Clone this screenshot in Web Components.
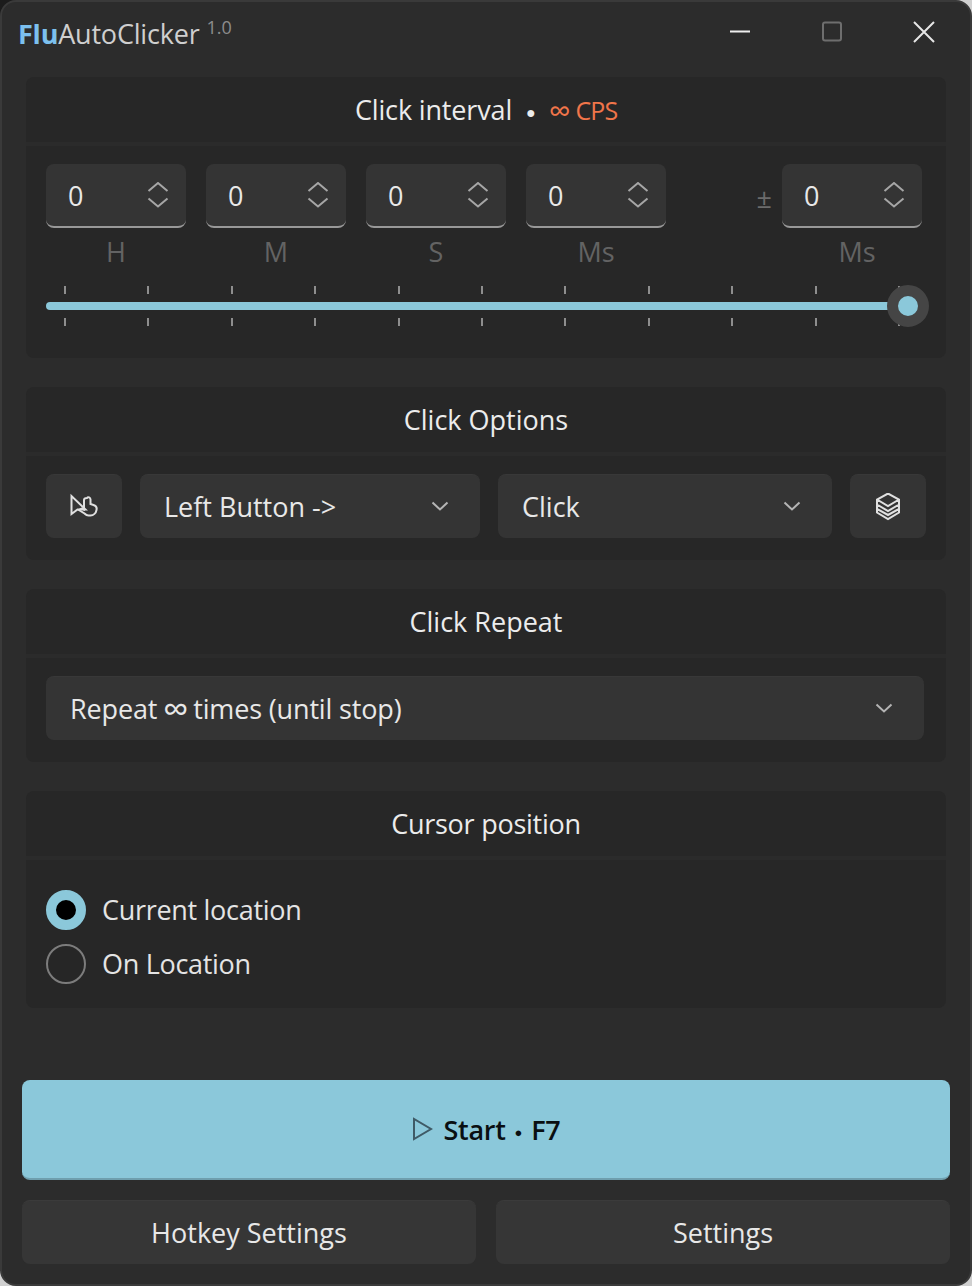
<!DOCTYPE html>
<html lang="en">
<head>
<meta charset="utf-8">
<title>FluAutoClicker</title>
<style>
    html, body { margin: 0; height: 100%; }
    body {
        background: linear-gradient(135deg, #1c1c1c 40%, #d0d0d0 40%);
        font: 27px "Open Sans", "Noto Sans", sans-serif;
        color: #e8e8e8;
    }
</style>
</head>
<body>
<app-window>
    <title-bar slot="title"></title-bar>

    <app-card>
        <span slot="title"><span style="letter-spacing:-.15px">Click interval</span><span style="margin:0 13px 0 14px;font-size:16px;vertical-align:2px">●</span><span style="color:#f0754a"><span style="font-size:31px;line-height:0;vertical-align:-2px;margin-right:-2px">∞</span> <span style="font-size:25px;letter-spacing:-1px">CPS</span></span></span>
        <div style="display:flex;padding-right:4px">
            <div style="display:flex;gap:20px">
                <number-field label="H"></number-field>
                <number-field label="M"></number-field>
                <number-field label="S"></number-field>
                <number-field label="Ms"></number-field>
            </div>
            <div style="display:flex;margin-left:auto">
                <span style="height:64px;line-height:68px;color:#6b6b6b;font-size:27px;margin-right:10px">±</span>
                <number-field label="Ms" shift="10"></number-field>
            </div>
        </div>
        <tick-slider></tick-slider>
    </app-card>

    <app-card>
        <span slot="title">Click Options</span>
        <div style="display:flex;gap:18px">
            <icon-button icon="cursor"></icon-button>
            <combo-box style="width:340px">Left Button -&gt;</combo-box>
            <combo-box style="width:334px" pad="24">Click</combo-box>
            <icon-button icon="layers"></icon-button>
        </div>
    </app-card>

    <app-card>
        <span slot="title">Click Repeat</span>
        <combo-box style="width:878px"><span style="letter-spacing:-.15px">Repeat <span style="font-size:36px;line-height:0;vertical-align:-3px;margin:0 -2px 0 -1px">∞</span> times (until stop)</span></combo-box>
    </app-card>

    <app-card tall>
        <span slot="title"><span style="letter-spacing:-.25px">Cursor position</span></span>
        <radio-item checked>Current location</radio-item>
        <radio-item>On Location</radio-item>
    </app-card>

    <div slot="footer" style="display:flex;flex-direction:column;gap:20px">
        <start-button>Start<span style="margin:0 9px;font-size:13px;vertical-align:3px">●</span>F7</start-button>
        <div style="display:flex;gap:20px">
            <flat-button>Hotkey Settings</flat-button>
            <flat-button>Settings</flat-button>
        </div>
    </div>
</app-window>

<script>
// Ventana principal: borde, titulo, tarjetas y pie
class AppWindow extends HTMLElement {
    constructor() {
        super();
        this.attachShadow({ mode: 'open' });
    }
    connectedCallback() {
        this.shadowRoot.innerHTML = `
            <style>
                :host {
                    display: flex;
                    flex-direction: column;
                    box-sizing: border-box;
                    height: 1286px;
                    padding: 0 20px 20px;
                    background: #2c2c2c;
                    border: 2px solid #3a3a3a;
                    border-radius: 16px;
                }
                .cards {
                    display: flex;
                    flex-direction: column;
                    gap: 29px;
                    margin: 0 4px;
                }
                .footer { margin-top: auto; }
            </style>
            <slot name="title"></slot>
            <div class="cards"><slot></slot></div>
            <div class="footer"><slot name="footer"></slot></div>
        `;
    }
}
customElements.define('app-window', AppWindow);

class TitleBar extends HTMLElement {
    constructor() {
        super();
        this.attachShadow({ mode: 'open' });
    }
    connectedCallback() {
        this.shadowRoot.innerHTML = `
            <style>
                :host {
                    display: flex;
                    align-items: flex-start;
                    height: 75px;
                    margin-left: -3px;
                    margin-right: 11px;
                }
                .name { font-size: 27px; line-height: 32px; margin-top: 16px; color: #cfcfcf; letter-spacing: -.2px; margin-left: -1px; }
                .name b { color: #7cc0ee; }
                .ver { font-size: 18px; line-height: 20px; margin: 15px 0 0 7px; color: #8c8c8c; }
                .controls { display: flex; margin-left: auto; margin-top: 17px; }
                svg { display: block; width: 28px; height: 28px; fill: none; }
            </style>
            <span class="name"><b>Flu</b>AutoClicker</span>
            <span class="ver">1.0</span>
            <div class="controls">
                <svg viewBox="0 0 28 28"><path d="M3 12.500h20" stroke="#eee" stroke-width="2"/></svg>
                <svg viewBox="0 0 28 28" style="margin-left:65px"><rect x="3" y="3.500" width="18" height="18" rx="2" stroke="#6e6e6e" stroke-width="2"/></svg>
                <svg viewBox="0 0 28 28" style="margin-left:63px"><path d="M3 3l20 20M23 3L3 23" stroke="#e6e6e6" stroke-width="2"/></svg>
            </div>
        `;
    }
}
customElements.define('title-bar', TitleBar);

class AppCard extends HTMLElement {
    constructor() {
        super();
        this.attachShadow({ mode: 'open' });
    }
    connectedCallback() {
        this.shadowRoot.innerHTML = `
            <style>
                :host {
                    display: block;
                    background: #272727;
                    border-radius: 8px;
                }
                .head {
                    height: 65px;
                    line-height: 66px;
                    text-align: center;
                    border-bottom: 4px solid #2b2b2b;
                    color: #ececec;
                }
                .body { padding: 18px 20px 22px; }
                :host([tall]) .body { padding: 23px 20px 17px; }
            </style>
            <div class="head"><slot name="title"></slot></div>
            <div class="body"><slot></slot></div>
        `;
    }
}
customElements.define('app-card', AppCard);

class NumberField extends HTMLElement {
    constructor() {
        super();
        this.attachShadow({ mode: 'open' });
    }
    connectedCallback() {
        const shift = this.getAttribute('shift') || 0;
        this.shadowRoot.innerHTML = `
            <style>
                :host { display: block; width: 140px; }
                .box {
                    box-sizing: border-box;
                    display: flex;
                    align-items: center;
                    justify-content: space-between;
                    height: 64px;
                    padding: 0 17px 0 22px;
                    background: #343434;
                    border-radius: 8px;
                    border-bottom: 2px solid #989898;
                    color: #e8e8e8;
                }
                svg { width: 22px; height: 26px; fill: none; stroke: #a6a6a6; stroke-width: 2; }
                .label {
                    height: 48px;
                    line-height: 48px;
                    text-align: center;
                    color: #636363;
                    padding-left: ${shift}px;
                }
            </style>
            <div class="box">
                <span>0</span>
                <svg viewBox="0 0 22 26"><path d="M1.500 9L11 1l9.500 8M1.500 16.500L11 24.500l9.500-8"/></svg>
            </div>
            <div class="label">${this.getAttribute('label')}</div>
        `;
    }
}
customElements.define('number-field', NumberField);

class TickSlider extends HTMLElement {
    constructor() {
        super();
        this.attachShadow({ mode: 'open' });
    }
    connectedCallback() {
        const ticks = '<i></i>'.repeat(11);
        this.shadowRoot.innerHTML = `
            <style>
                :host { display: block; position: relative; height: 40px; margin: 10px 0 10px; width: 884px; }
                .ticks {
                    display: flex;
                    justify-content: space-between;
                    height: 8px;
                    padding: 0 30px 0 18px;
                }
                .ticks + .track { margin: 8px 22px 8px 0; }
                i { display: block; width: 2px; height: 8px; background: #8e8e8e; }
                .track { height: 8px; border-radius: 4px; background: #8bc8da; }
                .thumb {
                    position: absolute;
                    left: 841px;
                    top: -1px;
                    box-sizing: border-box;
                    width: 42px;
                    height: 42px;
                    border-radius: 50%;
                    background: #8bc8da;
                    border: 11px solid #454545;
                }
            </style>
            <div class="ticks">${ticks}</div>
            <div class="track"></div>
            <div class="ticks">${ticks}</div>
            <div class="thumb"></div>
        `;
    }
}
customElements.define('tick-slider', TickSlider);

class ComboBox extends HTMLElement {
    constructor() {
        super();
        this.attachShadow({ mode: 'open' });
    }
    connectedCallback() {
        const pad = this.getAttribute('pad') || 24;
        this.shadowRoot.innerHTML = `
            <style>
                :host {
                    display: flex;
                    align-items: center;
                    justify-content: space-between;
                    box-sizing: border-box;
                    height: 64px;
                    padding: 0 31px 0 ${pad}px;
                    background: #343434;
                    border-top: 1px solid #383838;
                    border-radius: 8px;
                    color: #e8e8e8;
                }
                svg { width: 18px; height: 10px; margin-top: -2px; fill: none; stroke: #b4b4b4; stroke-width: 2; }
            </style>
            <span><slot></slot></span>
            <svg viewBox="0 0 18 10"><path d="M1.500 1.500L9 8.500l7.500-7"/></svg>
        `;
    }
}
customElements.define('combo-box', ComboBox);

class IconButton extends HTMLElement {
    constructor() {
        super();
        this.attachShadow({ mode: 'open' });
    }
    connectedCallback() {
        const icons = {
            // flecha del cursor con la mano encima
            cursor: `<path d="M1.500 3v18l6-4.500h8z"/><path d="M17 5c1-1.500 3.500-.5 3.500 1.500v4.500l3 1c3 1 3.500 3 3 5-.5 3-3 5.500-6 5.500h-2c-2 0-3-1-4-2l-5.500-3.500 2.500-1.500 2.500 1V7c0-1 1-2 3-2z"/>`,
            layers: `<path d="M14 .5l11 6v5L14 18 3 11.500v-5zM3 6.500L14 13l11-6.500M3 11.500V16l11 6 11-6v-4.500M3 16v3.500L14 26l11-6.500V16"/>`
        };
        this.shadowRoot.innerHTML = `
            <style>
                :host {
                    display: flex;
                    align-items: center;
                    justify-content: center;
                    box-sizing: border-box;
                    flex: none;
                    width: 76px;
                    height: 64px;
                    background: #343434;
                    border-top: 1px solid #383838;
                    border-radius: 8px;
                }
                svg { width: 28px; height: 28px; fill: none; stroke: #e0e0e0; stroke-width: 2; }
            </style>
            <svg viewBox="0 0 28 28">${icons[this.getAttribute('icon')]}</svg>
        `;
    }
}
customElements.define('icon-button', IconButton);

class RadioItem extends HTMLElement {
    constructor() {
        super();
        this.attachShadow({ mode: 'open' });
    }
    connectedCallback() {
        this.shadowRoot.innerHTML = `
            <style>
                :host {
                    display: flex;
                    align-items: center;
                    gap: 16px;
                    height: 54px;
                    color: #e4e4e4;
                    letter-spacing: -.3px;
                }
                .dot {
                    box-sizing: border-box;
                    width: 40px;
                    height: 40px;
                    border-radius: 50%;
                    border: 2px solid #7c7c7c;
                    background: #262626;
                }
                :host([checked]) .dot { border: 10px solid #8bc8da; background: #000; }
                .text { margin-top: -2px; }
            </style>
            <span class="dot"></span>
            <span class="text"><slot></slot></span>
        `;
    }
}
customElements.define('radio-item', RadioItem);

class StartButton extends HTMLElement {
    constructor() {
        super();
        this.attachShadow({ mode: 'open' });
    }
    connectedCallback() {
        this.shadowRoot.innerHTML = `
            <style>
                :host {
                    display: flex;
                    align-items: center;
                    justify-content: center;
                    gap: 11px;
                    box-sizing: border-box;
                    height: 100px;
                    background: #8bc8da;
                    border-bottom: 2px solid #6f9fae;
                    border-radius: 8px;
                    color: #0a0f12;
                    font-weight: 600;
                    letter-spacing: -.3px;
                }
                svg { width: 21px; height: 24px; fill: none; stroke: #3f5a66; stroke-width: 2; }
            </style>
            <svg viewBox="0 0 21 24"><path d="M2 2v20l17-10z"/></svg>
            <span><slot></slot></span>
        `;
    }
}
customElements.define('start-button', StartButton);

class FlatButton extends HTMLElement {
    constructor() {
        super();
        this.attachShadow({ mode: 'open' });
    }
    connectedCallback() {
        this.shadowRoot.innerHTML = `
            <style>
                :host {
                    display: flex;
                    flex: 1;
                    align-items: center;
                    justify-content: center;
                    box-sizing: border-box;
                    height: 64px;
                    background: #363636;
                    border-top: 1px solid #3b3b3b;
                    border-radius: 8px;
                    color: #e8e8e8;
                }
            </style>
            <slot></slot>
        `;
    }
}
customElements.define('flat-button', FlatButton);
</script>
</body>
</html>
